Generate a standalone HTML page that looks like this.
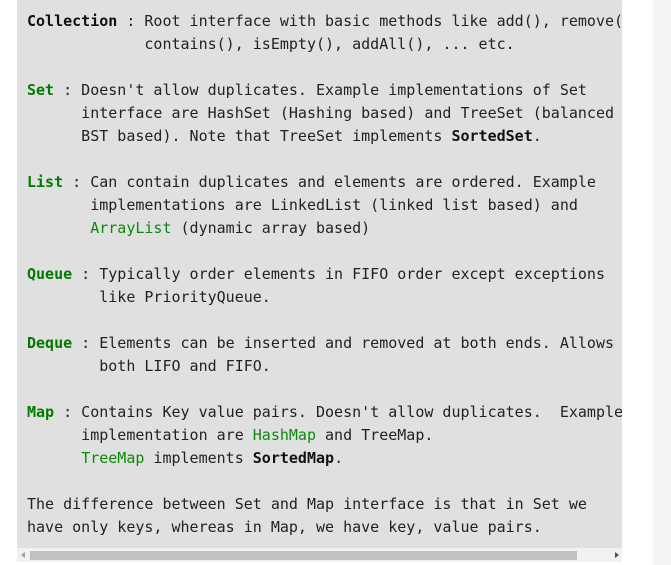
<!DOCTYPE html>
<html><head><style>
html,body{margin:0;padding:0;background:#fff;width:671px;height:565px;overflow:hidden}
.strip{position:absolute;left:653px;top:0;width:18px;height:565px;background:#f4f4f4}
.box{position:absolute;left:17px;top:-4px;width:605px;height:566px;background:#e0e0e0;border-radius:6px 6px 0 0;overflow:hidden}
pre{margin:0;position:absolute;left:10px;top:13.5px;font-family:"DejaVu Sans Mono","Liberation Mono",monospace;font-size:15px;line-height:23px;color:#222;white-space:pre}
b{font-weight:bold;color:#111}
.g{color:#007a00;font-weight:bold}
.l{color:#0a8a0a}
.sb{position:absolute;left:0;top:552px;width:605px;height:14px;background:#f1f1f1}
.th{position:absolute;left:13px;top:3px;width:547px;height:9px;background:#c1c1c1}
.al{position:absolute;left:4px;top:4px;width:0;height:0;border-top:3px solid transparent;border-bottom:3px solid transparent;border-right:4px solid #a0a0a0}
.ar{position:absolute;left:598px;top:4px;width:0;height:0;border-top:3px solid transparent;border-bottom:3px solid transparent;border-left:4px solid #505050}
</style></head><body>
<div class="strip"></div>
<div class="box"><pre><b>Collection</b> : Root interface with basic methods like add(), remove(),
             contains(), isEmpty(), addAll(), ... etc.

<span class="g">Set</span> : Doesn't allow duplicates. Example implementations of Set
      interface are HashSet (Hashing based) and TreeSet (balanced
      BST based). Note that TreeSet implements <b>SortedSet</b>.

<span class="g">List</span> : Can contain duplicates and elements are ordered. Example
       implementations are LinkedList (linked list based) and
       <span class="l">ArrayList</span> (dynamic array based)

<span class="g">Queue</span> : Typically order elements in FIFO order except exceptions
        like PriorityQueue.

<span class="g">Deque</span> : Elements can be inserted and removed at both ends. Allows
        both LIFO and FIFO.

<span class="g">Map</span> : Contains Key value pairs. Doesn't allow duplicates.  Example
      implementation are <span class="l">HashMap</span> and TreeMap.
      <span class="l">TreeMap</span> implements <b>SortedMap</b>.

The difference between Set and Map interface is that in Set we
have only keys, whereas in Map, we have key, value pairs.</pre>
<div class="sb"><div class="al"></div><div class="th"></div><div class="ar"></div></div>
</div>
</body></html>
